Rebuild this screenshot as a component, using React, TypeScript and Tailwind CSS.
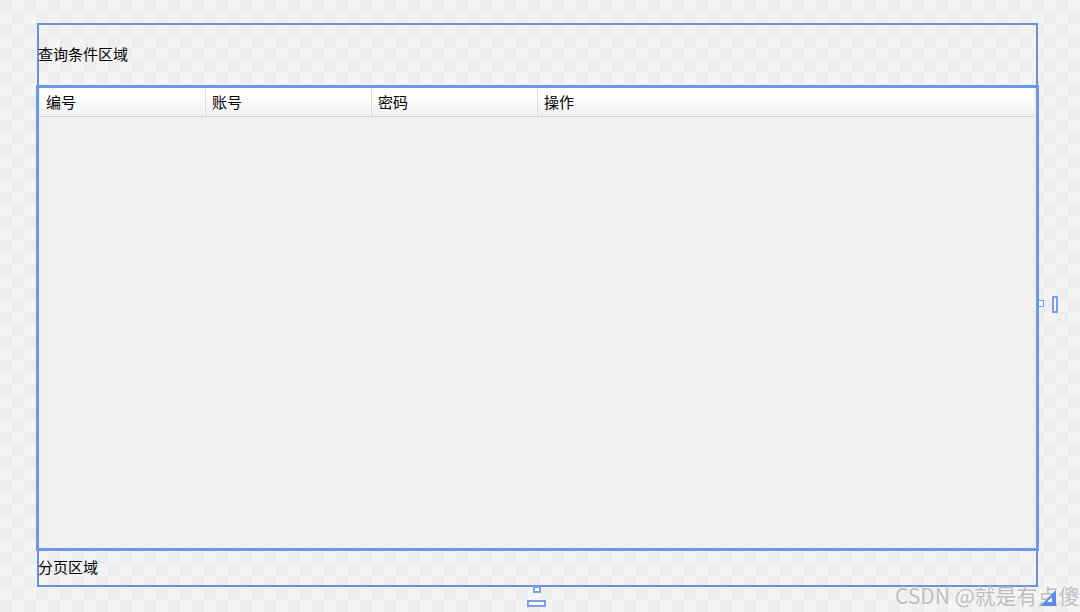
import React from "react";

const font = { fontFamily: '"Noto Sans CJK SC", "Noto Sans", sans-serif' };

const columns = ["编号", "账号", "密码"];

export default function App() {
  return (
    <div
      className="relative w-[1080px] h-[612px] overflow-hidden pt-[23px] pl-[37px] bg-[conic-gradient(#f4f4f4_25%,#eeeeee_0_50%,#f4f4f4_0_75%,#eeeeee_0)] bg-[length:24px_24px] text-[15px] text-black"
      style={font}
    >
      {/* main form frame */}
      <div className="w-[1001px] h-[564px] border-2 border-[#6f90d8] flex flex-col">
        {/* query area */}
        <div className="h-[60px] flex items-center -ml-[1px] pb-[3px] leading-none">查询条件区域</div>

        {/* table */}
        <div className="-mx-[3px] h-[466px] border-[3px] border-[#6a98ea] bg-[#f0f0f0] flex flex-col pl-[1px] pr-[2px]">
          <div className="flex h-[29px] border-b border-[#d3d3d3] bg-[linear-gradient(#ffffff,#fdfdfd_40%,#eeeff1)]">
            {columns.map((c) => (
              <div
                key={c}
                className="w-[166px] flex items-center pl-[6px] pb-[2px] border-r border-[#dadada] shadow-[inset_-1px_0_0_#ffffff] leading-none"
              >
                {c}
              </div>
            ))}
            <div className="flex-1 flex items-center pl-[6px] pb-[2px] leading-none">操作</div>
          </div>
          <div className="flex-1" />
        </div>

        {/* pagination area */}
        <div className="flex-1 flex items-center -ml-[1px] pb-[3px] leading-none">分页区域</div>
      </div>

      {/* watermark */}
      <div
        className="absolute left-[895px] top-[582px] text-[21px] leading-[26px] text-[#bdbdbd] [text-shadow:0_0_2px_#ffffff]"
        style={font}
      >
        CSDN @就是有点傻
      </div>

      {/* resize handles */}
      <div className="absolute left-[1038px] top-[300px] w-[6px] h-[7px] border border-[#6a98ea] bg-white" />
      <div className="absolute left-[1052px] top-[296px] w-[6px] h-[17px] border-2 border-[#7aa0ea] bg-white" />
      <div className="absolute left-[533px] top-[586px] w-[8px] h-[7px] border-2 border-[#7aa0ea] bg-white" />
      <div className="absolute left-[527px] top-[600px] w-[19px] h-[7px] border-2 border-[#7aa0ea] bg-white" />
      <svg className="absolute left-[1039px] top-[589px]" width="18" height="18" viewBox="0 0 18 18">
        <polygon points="17,1 17,17 1,17" fill="#5b8be6" />
        <polygon points="13,8 13,13 8,13" fill="#ffffff" />
      </svg>
    </div>
  );
}
